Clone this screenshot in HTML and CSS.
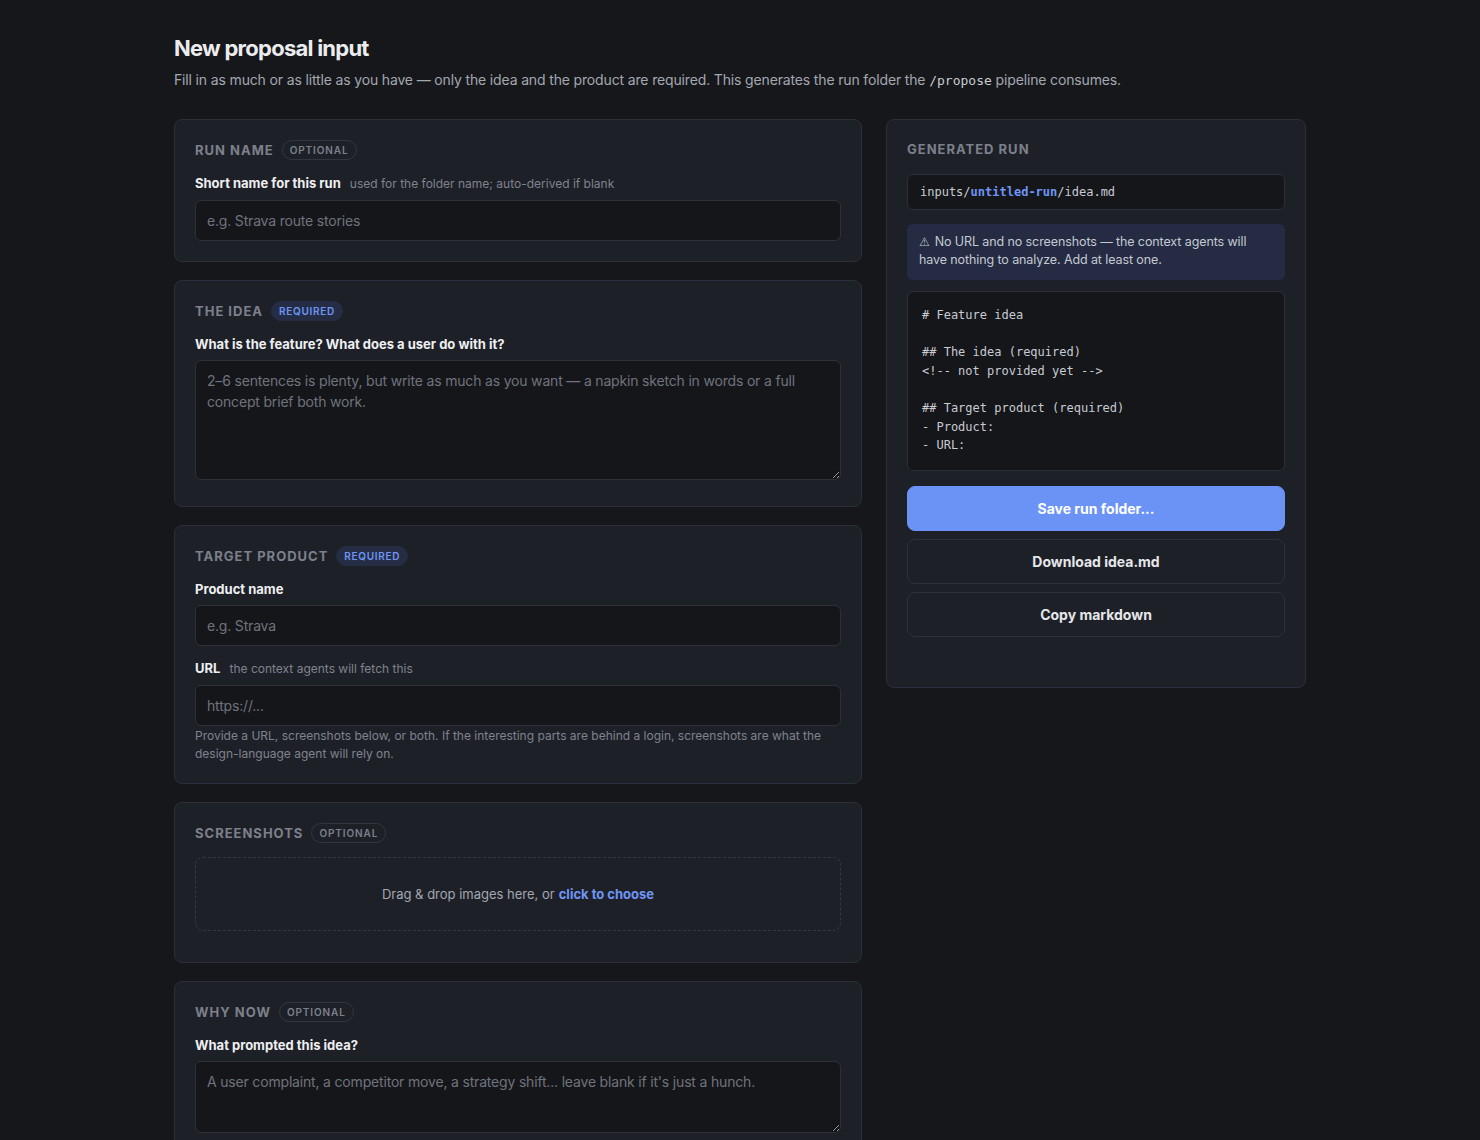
FILE: index.html
```html
<!DOCTYPE html>
<html lang="en">
<head>
    <meta charset="UTF-8">
    <meta name="viewport" content="width=device-width, initial-scale=1.0">
    <title>New proposal input</title>
    <link rel="stylesheet" href="styles.css">
</head>
<body>
    <div class="page">
        <h1>New proposal input</h1>
        <p class="intro">Fill in as much or as little as you have — only the idea and the product are required. This generates the run folder the <code>/propose</code> pipeline consumes.</p>

        <div class="layout">
            <div class="form">
                <section class="card">
                    <div class="card-head">
                        <h2>Run name</h2>
                        <span class="badge">Optional</span>
                    </div>
                    <label for="run-name">Short name for this run <span class="hint">used for the folder name; auto-derived if blank</span></label>
                    <input type="text" id="run-name" placeholder="e.g. Strava route stories" />
                </section>

                <section class="card">
                    <div class="card-head">
                        <h2>The idea</h2>
                        <span class="badge required">Required</span>
                    </div>
                    <label for="idea">What is the feature? What does a user do with it?</label>
                    <textarea id="idea" class="tall" placeholder="2–6 sentences is plenty, but write as much as you want — a napkin sketch in words or a full concept brief both work."></textarea>
                </section>

                <section class="card">
                    <div class="card-head">
                        <h2>Target product</h2>
                        <span class="badge required">Required</span>
                    </div>
                    <label for="product">Product name</label>
                    <input type="text" id="product" placeholder="e.g. Strava" />
                    <label for="url">URL <span class="hint">the context agents will fetch this</span></label>
                    <input type="text" id="url" placeholder="https://..." />
                    <p class="help">Provide a URL, screenshots below, or both. If the interesting parts are behind a login, screenshots are what the design-language agent will rely on.</p>
                </section>

                <section class="card">
                    <div class="card-head">
                        <h2>Screenshots</h2>
                        <span class="badge">Optional</span>
                    </div>
                    <div class="dropzone">
                        Drag &amp; drop images here, or <a href="#">click to choose</a>
                    </div>
                    <div class="thumbs"></div>
                </section>

                <section class="card">
                    <div class="card-head">
                        <h2>Why now</h2>
                        <span class="badge">Optional</span>
                    </div>
                    <label for="why">What prompted this idea?</label>
                    <textarea id="why" class="short" placeholder="A user complaint, a competitor move, a strategy shift... leave blank if it's just a hunch."></textarea>
                </section>
            </div>

            <aside class="card output">
                <div class="card-head">
                    <h2>Generated run</h2>
                </div>
                <div class="path">inputs/<strong>untitled-run</strong>/idea.md</div>
                <div class="warning"><span class="warn-icon">⚠</span>No URL and no screenshots — the context agents will have nothing to analyze. Add at least one.</div>
                <pre class="preview"># Feature idea

## The idea (required)
&lt;!-- not provided yet --&gt;

## Target product (required)
- Product:
- URL:</pre>
                <button class="primary">Save run folder...</button>
                <button>Download idea.md</button>
                <button>Copy markdown</button>
                <div class="status"></div>
            </aside>
        </div>
    </div>
</body>
</html>
```

FILE: styles.css
```css
body {
    margin: 0;
    background: #16171b;
    color: #e6e7ea;
    font-family: Inter, "Noto Sans", sans-serif;
}
.page {
    width: 1132px;
    margin: 0 auto;
    padding: 34px 0 40px;
}
h1 {
    margin: 0;
    font-size: 22px;
    font-weight: 700;
    letter-spacing: -0.75px;
    color: #ececef;
    line-height: 28px;
}
.intro {
    margin: 8px 0 28px;
    font-size: 14px;
    letter-spacing: -0.15px;
    color: #a3a7b0;
    line-height: 20px;
}
.intro code {
    font-family: "DejaVu Sans Mono", monospace;
    font-size: 13px;
    letter-spacing: 0;
    color: #c8cbd2;
}
.layout {
    display: flex;
    gap: 24px;
    align-items: flex-start;
}
.form {
    width: 688px;
    display: flex;
    flex-direction: column;
    gap: 18px;
}
.card {
    background: #1e2028;
    border: 1px solid #2c2f39;
    border-radius: 8px;
    padding: 20px 20px 20px;
}
.card-head {
    display: flex;
    align-items: center;
    gap: 8px;
    margin-bottom: 14px;
}
h2 {
    margin: 0;
    font-size: 13px;
    font-weight: 700;
    text-transform: uppercase;
    letter-spacing: 1px;
    color: #7c808b;
    line-height: 20px;
}
.badge {
    font-size: 10px;
    font-weight: 600;
    text-transform: uppercase;
    letter-spacing: 0.9px;
    color: #7c808b;
    border: 1px solid #33363f;
    border-radius: 10px;
    padding: 0 7px;
    line-height: 18px;
}
.badge.required {
    color: #6f95f5;
    background: #252d45;
    border-color: #252d45;
    letter-spacing: 0.7px;
}
label {
    display: block;
    font-size: 13px;
    font-weight: 700;
    color: #eeeff1;
    line-height: 18px;
    margin-bottom: 7px;
}
.hint {
    font-weight: 400;
    font-size: 12px;
    color: #7f838d;
    margin-left: 6px;
}
input,
textarea {
    display: block;
    width: 100%;
    box-sizing: border-box;
    background: #15161a;
    border: 1px solid #2e313a;
    border-radius: 6px;
    color: #e6e7ea;
    font-family: Inter, "Noto Sans", sans-serif;
    font-size: 14px;
    letter-spacing: -0.18px;
    line-height: 21px;
    padding: 9px 11px;
}
input::placeholder,
textarea::placeholder {
    color: #6f737d;
}
input + label {
    margin-top: 13px;
}
textarea {
    resize: vertical;
}
textarea.tall {
    height: 120px;
}
textarea.short {
    height: 72px;
}
.card:has(textarea) {
    padding-bottom: 26px;
}
.help {
    margin: 1px 0 0;
    font-size: 12px;
    line-height: 18px;
    color: #7f838d;
}
.dropzone {
    border: 1px dashed #353843;
    border-radius: 8px;
    height: 74px;
    box-sizing: border-box;
    display: flex;
    align-items: center;
    justify-content: center;
    font-size: 13px;
    color: #a3a7b0;
    margin-top: 3px;
}
.dropzone a {
    color: #6f95f5;
    font-weight: 700;
    text-decoration: none;
    margin-left: 4px;
}
.thumbs {
    min-height: 11px;
}
.output {
    width: 420px;
    box-sizing: border-box;
    padding-bottom: 30px;
}
.output .card-head {
    margin-bottom: 15px;
    margin-top: -1px;
}
.path {
    background: #15161a;
    border: 1px solid #2c2f39;
    border-radius: 6px;
    padding: 0 12px;
    height: 36px;
    line-height: 34px;
    box-sizing: border-box;
    font-family: "DejaVu Sans Mono", monospace;
    font-size: 12px;
    color: #c8cbd2;
}
.path strong {
    color: #6f95f5;
}
.warning {
    margin-top: 14px;
    background: #242b42;
    border-radius: 6px;
    padding: 9px 12px 11px;
    font-size: 12.5px;
    letter-spacing: -0.1px;
    line-height: 18px;
    color: #c5c9d2;
}
.warn-icon {
    display: inline-block;
    margin-right: 5px;
    font-family: "DejaVu Sans", sans-serif;
    font-size: 12px;
    line-height: 12px;
}
.preview {
    margin: 11px 0 15px;
    background: #15161a;
    border: 1px solid #2c2f39;
    border-radius: 6px;
    padding: 14px 14px 15px;
    font-family: "DejaVu Sans Mono", monospace;
    font-size: 12px;
    line-height: 18.6px;
    color: #c8cbd2;
    white-space: pre-wrap;
}
button {
    display: block;
    width: 100%;
    height: 45px;
    margin-bottom: 8px;
    background: transparent;
    border: 1px solid #2e313a;
    border-radius: 8px;
    color: #e6e7ea;
    font-family: Inter, "Noto Sans", sans-serif;
    font-size: 14px;
    font-weight: 700;
    cursor: pointer;
}
button.primary {
    background: #6b93f5;
    border-color: #6b93f5;
    color: #ffffff;
}
button:hover {
    border-color: #454955;
}
.status {
    min-height: 12px;
}
```
